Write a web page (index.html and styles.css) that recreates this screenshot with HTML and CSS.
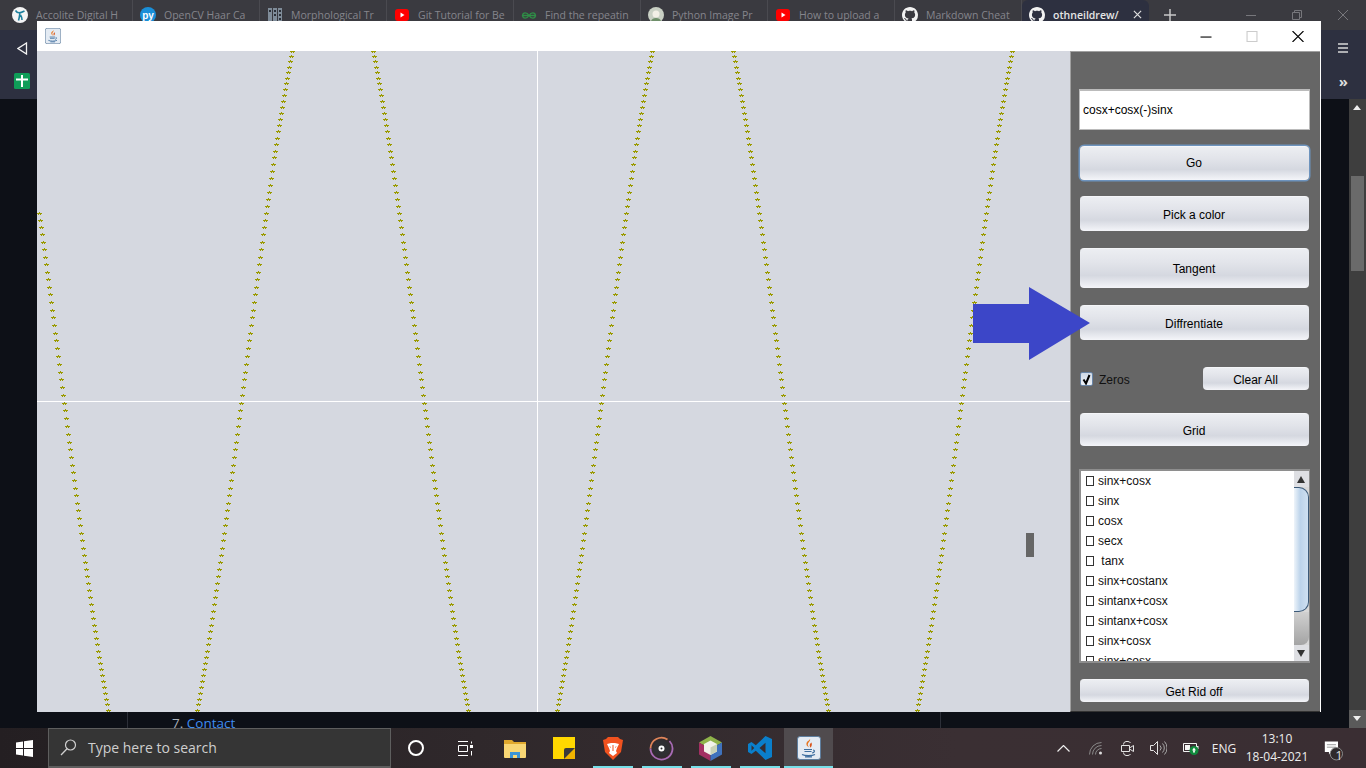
FILE: index.html
```html
<!DOCTYPE html>
<html lang="en">
<head>
    <meta charset="UTF-8">
    <meta name="viewport" content="width=device-width, initial-scale=1.0">
    <title>Graph plotter</title>
    <link rel="stylesheet" href="styles.css">
</head>
<body>

    <!-- Shared icons -->
    <svg class="defs" width="0" height="0">
        <symbol id="i-github" viewBox="0 0 16 16">
            <path fill="#f2f2f2" d="M8 0C3.58 0 0 3.58 0 8c0 3.54 2.29 6.53 5.47 7.59.4.07.55-.17.55-.38 0-.19-.01-.82-.01-1.49-2.01.37-2.53-.49-2.69-.94-.09-.23-.48-.94-.82-1.13-.28-.15-.68-.52-.01-.53.63-.01 1.08.58 1.23.82.72 1.21 1.87.87 2.33.66.07-.52.28-.87.51-1.07-1.78-.2-3.64-.89-3.64-3.95 0-.87.31-1.59.82-2.15-.08-.2-.36-1.02.08-2.12 0 0 .67-.21 2.2.82.64-.18 1.32-.27 2-.27.68 0 1.36.09 2 .27 1.53-1.04 2.2-.82 2.2-.82.44 1.1.16 1.92.08 2.12.51.56.82 1.27.82 2.15 0 3.07-1.87 3.75-3.65 3.95.29.25.54.73.54 1.48 0 1.07-.01 1.93-.01 2.2 0 .21.15.46.55.38A8.013 8.013 0 0016 8c0-4.42-3.58-8-8-8z"/>
        </symbol>
        <symbol id="i-youtube" viewBox="0 0 16 16">
            <rect x="1" y="2" width="14" height="12" rx="3" fill="#f00"/>
            <path fill="#fff" d="M6.500 5.500v5l4-2.500z"/>
        </symbol>
        <symbol id="i-java" viewBox="0 0 24 24">
            <rect x=".5" y=".5" width="23" height="23" rx="2.500" fill="#e4ebf3" stroke="#5f7f9f"/>
            <path fill="#e8761f" d="M13 3c1 2-3 4-2 6.500.4 1 1 1.500 1.300 2-2.300-1-3.600-3-2.600-5C10.400 5.200 12.500 4.500 13 3z"/>
            <path fill="#d9541a" d="M14.500 6.500c-1.300 1-2.400 2.200-1.500 4 .2.500.4.900.3 1.300 1.500-1.300 2-3.500 1.200-5.300z"/>
            <path fill="none" stroke="#3f6f9f" stroke-width="1.200" d="M7 13.500h8M7.500 15.500h7M16 14c2 0 2 2.500-1 3M5 18.500c3 1.500 10 1.500 13 0M8 20.800h7"/>
        </symbol>
    </svg>

    <!-- Browser behind the window -->
    <div class="browser">
        <div class="tabstrip">
            <div class="tab">
                <svg class="favicon" viewBox="0 0 16 16"><circle cx="8" cy="8" r="8" fill="#f4f4f4"/><path fill="none" stroke="#1d7f9c" stroke-width="1.600" d="M3.500 3.500c2 3 4 3 9 .5M8 5.500c-.5 3-.5 5-1.500 8M8.500 8c1 1.500 1.500 3 1.500 5"/></svg>
                <span class="tab-title">Accolite Digital H</span>
            </div>
            <div class="tab">
                <svg class="favicon" viewBox="0 0 16 16"><circle cx="8" cy="8" r="8" fill="#1a8fd8"/><text x="8" y="11.500" text-anchor="middle" class="py">py</text></svg>
                <span class="tab-title">OpenCV Haar Ca</span>
            </div>
            <div class="tab">
                <svg class="favicon" viewBox="0 0 16 16"><path fill="#7f8c99" d="M1 1h4v14H1zM6 1h4v14H6zM11 1h4v14h-4z"/><path fill="#2b3038" d="M2 3h2v2H2zM7 3h2v2H7zM12 3h2v2h-2zM7 7h2v2H7zM12 7h2v2h-2zM12 11h2v2h-2z"/></svg>
                <span class="tab-title">Morphological Tr</span>
            </div>
            <div class="tab">
                <svg class="favicon"><use href="#i-youtube"/></svg>
                <span class="tab-title">Git Tutorial for Be</span>
            </div>
            <div class="tab">
                <svg class="favicon" viewBox="0 0 16 16"><path fill="none" stroke="#2f8d46" stroke-width="1.300" d="M8 8.500C6 5 2 5 1.500 8.500h13C14 5 10 5 8 8.500 6 12 2 12 1.500 8.500M8 8.500c2 3.500 6 3.500 6.500 0"/></svg>
                <span class="tab-title">Find the repeatin</span>
            </div>
            <div class="tab">
                <svg class="favicon" viewBox="0 0 16 16"><circle cx="8" cy="8" r="8" fill="#c9d0c4"/><circle cx="8" cy="7" r="3.500" fill="#f2efe6"/><path fill="#6f8f6a" d="M3 14c1-4 9-4 10 0-3 2.500-7 2.500-10 0z"/></svg>
                <span class="tab-title">Python Image Pr</span>
            </div>
            <div class="tab">
                <svg class="favicon"><use href="#i-youtube"/></svg>
                <span class="tab-title">How to upload a</span>
            </div>
            <div class="tab">
                <svg class="favicon"><use href="#i-github"/></svg>
                <span class="tab-title">Markdown Cheat</span>
            </div>
            <div class="tab active">
                <svg class="favicon"><use href="#i-github"/></svg>
                <span class="tab-title">othneildrew/</span>
                <svg class="tab-close" viewBox="0 0 10 10"><path d="M1 1l8 8M9 1l-8 8"/></svg>
            </div>
            <svg class="new-tab" viewBox="0 0 12 12"><path d="M6 0v12M0 6h12"/></svg>
            <div class="chrome-controls">
                <svg viewBox="0 0 10 10"><path d="M0 5.500h10"/></svg>
                <svg viewBox="0 0 10 10"><path d="M.5 2.500h7v7h-7zM2.500 2.500v-2h7v7h-2"/></svg>
                <svg viewBox="0 0 10 10"><path d="M0 0l10 10M10 0L0 10"/></svg>
            </div>
        </div>

        <div class="toolbar">
            <div class="toolbar-row">
                <svg class="back" viewBox="0 0 11 13"><path d="M9.500 1v11L1 6.500z"/></svg>
                <svg class="menu" viewBox="0 0 10 10"><path d="M0 1h10M0 5h10M0 9h10"/></svg>
            </div>
            <div class="toolbar-row second">
                <svg class="sheet" viewBox="0 0 16 16"><rect width="16" height="16" rx="1.500" fill="#0f9d58"/><path fill="#fff" d="M7 2h2v3.500h5v2H9V14H7V7.500H2v-2h5z"/></svg>
                <span class="more">»</span>
            </div>
        </div>

        <div class="page">
            <div class="article">
                <p class="toc-line">7. <a class="toc-link">Contact</a></p>
            </div>
            <div class="page-scroll">
                <span class="page-arrow up"></span>
                <span class="page-thumb"></span>
                <span class="page-arrow down"></span>
            </div>
        </div>

        <div class="taskbar">
            <div class="start">
                <svg width="17" height="17" viewBox="0 0 17 17"><path fill="#fff" d="M0 2.400l7-1V8H0zM8 1.200L17 0v8H8zM0 9h7v6.600l-7-1zM8 9h9v8l-9-1.200z"/></svg>
            </div>
            <div class="search">
                <svg width="17" height="17" viewBox="0 0 17 17"><circle cx="10.500" cy="6" r="5" fill="none" stroke="#d0d0d0" stroke-width="1.200"/><path d="M7 9.800L1 16" stroke="#d0d0d0" stroke-width="1.300"/></svg>
                <span>Type here to search</span>
            </div>
            <div class="cortana"><span class="ring"></span></div>
            <div class="taskview">
                <svg width="17" height="15" viewBox="0 0 17 15"><path fill="none" stroke="#fff" d="M1 .5h10M1.500 4.500h9v6h-9zM1 14.500h10M14.500 .5v2M14.500 10v4.500"/><rect x="13" y="4" width="3" height="3" fill="#fff"/></svg>
            </div>

            <div class="app">
                <svg width="22" height="19" viewBox="0 0 22 19"><path fill="#e0a92e" d="M0 1h8l2 2h12v4H0z"/><path fill="#f8d775" d="M0 5h22v13a1 1 0 01-1 1H1a1 1 0 01-1-1z"/><path fill="#3c95d6" d="M6 19v-6h10v6h-3v-3H9v3z"/></svg>
            </div>
            <div class="app">
                <svg width="22" height="22" viewBox="0 0 22 22"><path fill="#ffd800" d="M0 0h22v22H0z"/><path fill="#f0b400" d="M22 11v11H11z"/><path fill="#3a3a3a" d="M11 22v-9a2 2 0 012-2h9z"/></svg>
            </div>
            <div class="app running">
                <svg width="20" height="23" viewBox="0 0 20 23"><path fill="#f1521f" d="M5 0h10l2 2 3 1-1 6-1 6-4 4-4 4-4-4-4-4-1-6-1-6 3-1z"/><path fill="#fff" d="M4 7l4-1h4l4 1-2 4-1 3 1 2-4 3-4-3 1-2-1-3z"/><path fill="#f1521f" d="M9.500 8h1v6h-1zM6 9l2 1v1zM14 9l-2 1v1z"/></svg>
            </div>
            <div class="app running">
                <svg width="25" height="25" viewBox="0 0 25 25"><circle cx="12.500" cy="12.500" r="8.500" fill="#2f2f33"/><path fill="none" stroke="#e0855a" stroke-width="1.800" d="M18.500 3.500A11 11 0 001.500 12.500"/><path fill="none" stroke="#a86bb5" stroke-width="1.800" d="M1.500 12.500A11 11 0 1020.500 5"/><circle cx="12.500" cy="12.500" r="3" fill="#fff"/><circle cx="12.500" cy="12.500" r="1" fill="#2f2f33"/></svg>
            </div>
            <div class="app running">
                <svg width="23" height="25" viewBox="0 0 23 25"><path fill="#8fb34a" d="M11.500 0L23 6.500 11.500 13 0 6.500z"/><path fill="#a32f62" d="M0 6.500L11.500 13v12L0 18.500z"/><path fill="#3f72bd" d="M23 6.500L11.500 13v12L23 18.500z"/><path fill="#f2f2ea" d="M11.500 4.500l6.500 3.500v7.500L11.500 19 5 15.500V8z"/><path fill="#c9d2b8" d="M11.500 11.500L18 8v7.500L11.500 19z"/></svg>
            </div>
            <div class="app running">
                <svg width="24" height="24" viewBox="0 0 24 24"><path fill="#0a7fcb" fill-rule="evenodd" d="M17.500 0L24 3v18l-6.500 3-9.700-9.300-4.300 3.300L0 16V8l3.500-2 4.300 3.300zM17.500 6.800L11.500 12l6 5.200zM3.500 9.300v5.400L6.300 12z"/></svg>
            </div>
            <div class="app running current">
                <svg width="24" height="24"><use href="#i-java"/></svg>
            </div>

            <div class="tray">
                <div class="tray-item w33"><svg width="13" height="7" viewBox="0 0 13 7"><path fill="none" stroke="#eee" stroke-width="1.200" d="M.5 6.500l6-6 6 6"/></svg></div>
                <div class="tray-item w32"><svg width="14" height="13" viewBox="0 0 14 13"><path fill="none" stroke="#8a8a8a" d="M.5 12.500A12 12 0 0112.500 .5M3.500 12.500a9 9 0 019-9M6.500 12.500a6 6 0 016-6"/><circle cx="11.500" cy="11" r="1.500" fill="#ddd"/></svg></div>
                <div class="tray-item w31"><svg width="13" height="15" viewBox="0 0 13 15"><path fill="none" stroke="#e4e4e4" d="M2.500 3.500A3 3 0 015 .5h2a3 3 0 012.500 1.500M2.500 11.500A3 3 0 005 14.500h2a3 3 0 002.500-1.500M.5 4.500h8v6h-8zM8.500 7l4-2.500v6l-4-2.500"/></svg></div>
                <div class="tray-item w31"><svg width="17" height="14" viewBox="0 0 17 14"><path fill="none" stroke="#e4e4e4" d="M.5 4.500h3l4-4v13l-4-4h-3z"/><path fill="none" stroke="#aaa" d="M10 4.500a3.500 3.500 0 010 5M12.500 2.500a6.500 6.500 0 010 9M14.500 .5a9.500 9.500 0 010 13"/></svg></div>
                <div class="tray-item w34"><svg width="16" height="14" viewBox="0 0 16 14"><path fill="none" stroke="#f4f4f4" d="M.5 2.500h13v8H.5z"/><path fill="#f4f4f4" d="M2 4h5v5H2zM14 5h1.500v3H14z"/><circle cx="11" cy="9.500" r="4.500" fill="#0f8a3c"/><path fill="#fff" d="M11 6.500l2 3-1.300-.2.300 2.200h-2l.3-2.200L9 9.500z"/></svg></div>
                <div class="tray-item w32 tray-text">ENG</div>
                <div class="clock">
                    <span>13:10</span>
                    <span>18-04-2021</span>
                </div>
                <div class="notify">
                    <svg width="34" height="32" viewBox="0 0 34 32"><path fill="#fff" d="M1 8h16v13H9l-3 3v-3H1z"/><path stroke="#888" d="M3.500 12h11M3.500 15h11"/><circle cx="15" cy="23" r="7.500" fill="#2f2a2c" stroke="#8a8a8a" stroke-width="1.200"/></svg>
                    <span class="notify-count">1</span>
                </div>
            </div>
        </div>
    </div>

    <!-- The Java window floating over the browser -->
    <div class="window">
        <div class="titlebar">
            <svg class="title-icon"><use href="#i-java"/></svg>
            <div class="win-controls">
                <svg viewBox="0 0 10 10"><path stroke="#000" d="M0 5.500h10"/></svg>
                <svg viewBox="0 0 10 10"><path stroke="#ccc" fill="none" d="M.5 .5h9v9h-9z"/></svg>
                <svg viewBox="0 0 10 10"><path stroke="#000" d="M0 0l10 10M10 0L0 10"/></svg>
            </div>
        </div>
        <div class="window-body">
            <div class="canvas">
                <svg id="plot" class="plot" width="1033" height="661">
                    <path d="M500.500 0v661M0 350.500h1033" stroke="#fff" fill="none"/>
                    <path id="curve" class="curve" d=""/>
                </svg>
                <span class="marker"></span>
            </div>
            <div class="panel">
                <div class="func-input">cosx+cosx(-)sinx</div>
                <button class="btn btn-go">Go</button>
                <button class="btn btn-pick">Pick a color</button>
                <button class="btn btn-tangent">Tangent</button>
                <button class="btn btn-diff">Diffrentiate</button>
                <div class="zero-row">
                    <label class="zeros">
                        <span class="check"><svg width="11" height="11" viewBox="0 0 11 11"><path fill="none" stroke="#000" stroke-width="2" d="M2.500 5.500l2.500 4L8.500 1"/></svg></span>
                        Zeros
                    </label>
                    <button class="btn btn-clear">Clear All</button>
                </div>
                <button class="btn btn-grid">Grid</button>
                <div class="func-list">
                    <ul class="funcs">
                        <li>sinx+cosx</li>
                        <li>sinx</li>
                        <li>cosx</li>
                        <li>secx</li>
                        <li>&nbsp;tanx</li>
                        <li>sinx+costanx</li>
                        <li>sintanx+cosx</li>
                        <li>sintanx+cosx</li>
                        <li>sinx+cosx</li>
                        <li>sinx+cosx</li>
                    </ul>
                    <div class="list-scroll">
                        <span class="list-arrow up"></span>
                        <span class="list-thumb"></span>
                        <span class="list-track"></span>
                        <span class="list-arrow down"></span>
                    </div>
                </div>
                <button class="btn btn-rid">Get Rid off</button>
            </div>
        </div>
    </div>

    <!-- Arrow pasted over the screenshot -->
    <svg class="big-arrow" width="117" height="73" viewBox="0 0 117 73">
        <path fill="#3c46c8" d="M0 17h56V0l61 36-61 37V56H0z"/>
    </svg>

    <script src="plot.js"></script>
</body>
</html>
```

FILE: styles.css
```css
* {
    box-sizing: border-box;
}

body {
    margin: 0;
    width: 1366px;
    height: 768px;
    overflow: hidden;
    background-color: #0d1017;
    font-family: "Open Sans", "Noto Sans", sans-serif;
}

.defs {
    position: absolute;
}

.browser {
    display: flex;
    flex-direction: column;
    height: 768px;
}

/* Tab strip */
.tabstrip {
    display: flex;
    align-items: center;
    height: 30px;
    padding-left: 5px;
    background-color: #3a3a40;
}

.tab {
    display: flex;
    align-items: center;
    flex: none;
    width: 127px;
    height: 30px;
    padding: 0 0 1px 7px;
    gap: 8px;
    border-right: 1px solid #4a4a50;
}

.tab:first-child {
    width: 128px;
}

.tab.active {
    background-color: #2d3040;
    border-right: none;
    border-radius: 6px 6px 0 0;
}

.favicon {
    flex: none;
    width: 16px;
    height: 16px;
}

.py {
    font-family: "Liberation Sans", sans-serif;
    font-size: 10px;
    font-weight: bold;
    fill: #fff;
}

.tab-title {
    flex: 1;
    min-width: 0;
    white-space: nowrap;
    font-size: 10.500px;
    line-height: 16px;
    color: #85858c;
}

.active .tab-title {
    flex: none;
    width: 78px;
    color: #e6e6e6;
    font-weight: 600;
}

.tab-close {
    flex: none;
    width: 9px;
    height: 9px;
    margin-left: -6px;
    stroke: #e0e0e0;
    stroke-width: 1.300;
}

.new-tab {
    flex: none;
    width: 12px;
    height: 12px;
    margin-left: 15px;
    stroke: #c8c8c8;
    stroke-width: 1.500;
}

.chrome-controls {
    display: flex;
    margin-left: auto;
    padding-bottom: 1px;
}

.chrome-controls svg {
    width: 46px;
    height: 10px;
    fill: none;
    stroke: #77777c;
}

/* Toolbar */
.toolbar {
    height: 69px;
    padding: 0 18px 4px 14px;
    background-color: #2d3040;
}

.toolbar-row {
    display: flex;
    justify-content: space-between;
    align-items: center;
    height: 36px;
}

.toolbar-row.second {
    height: 29px;
}

.back {
    width: 11px;
    height: 13px;
    margin-left: 3px;
    fill: none;
    stroke: #f2f2f2;
    stroke-width: 1.300;
}

.menu {
    width: 10px;
    height: 10px;
    stroke: #d8d8d8;
    stroke-width: 1.500;
}

.sheet {
    width: 16px;
    height: 16px;
}

.more {
    font-size: 15px;
    line-height: 16px;
    font-weight: bold;
    color: #dcdcdc;
}

/* Page behind the window */
.page {
    display: flex;
    flex: 1;
    min-height: 0;
}

.article {
    display: flex;
    align-items: flex-end;
    width: 814px;
    margin-left: 127px;
    padding-left: 44px;
    border-left: 1px solid #2c2f38;
    border-right: 1px solid #2c2f38;
    overflow: hidden;
}

.toc-line {
    margin: 0 0 -3px;
    font-size: 13.500px;
    line-height: 16px;
    color: #a9b1ba;
}

.toc-link {
    color: #3f8cf0;
}

.page-scroll {
    display: flex;
    flex-direction: column;
    align-items: center;
    width: 17px;
    margin-left: auto;
    background-color: #3e3e3e;
}

.page-arrow {
    position: relative;
    display: block;
    width: 17px;
    height: 18px;
}

.page-arrow.down {
    margin-top: auto;
    background-color: #5a5a5a;
}

.page-arrow::after {
    content: "";
    position: absolute;
    left: 4px;
    top: 6px;
    border-left: 4.500px solid transparent;
    border-right: 4.500px solid transparent;
}

.page-arrow.up::after {
    border-bottom: 5px solid #eee;
}

.page-arrow.down::after {
    border-top: 5px solid #eee;
}

.page-thumb {
    display: block;
    width: 13px;
    height: 95px;
    margin-top: 59px;
    background-color: #6a6a6a;
}

/* Taskbar */
.taskbar {
    display: flex;
    align-items: stretch;
    height: 40px;
    background: linear-gradient(to right, #241f22, #2f282b 35%, #3a2f33 70%, #3a2e33);
    color: #eee;
}

.start {
    display: flex;
    align-items: center;
    justify-content: center;
    width: 48px;
}

.search {
    display: flex;
    align-items: center;
    width: 343px;
    padding-left: 11px;
    gap: 11px;
    background-color: #353535;
    border: 1px solid #5e5e5e;
    border-bottom-width: 2px;
    font-size: 14px;
    color: #cfcfcf;
}

.cortana,
.taskview,
.app {
    display: flex;
    align-items: center;
    justify-content: center;
}

.cortana {
    width: 50px;
}

.ring {
    width: 16px;
    height: 16px;
    border: 2px solid #fff;
    border-radius: 50%;
}

.taskview {
    width: 49px;
}

.app {
    position: relative;
    width: 49px;
}

.app.running::after {
    content: "";
    position: absolute;
    left: 5px;
    right: 4px;
    bottom: 0;
    height: 2px;
    background-color: #76dfe8;
}

.app.current {
    background-color: #504b4e;
}

.app.current::after {
    left: 0;
    right: 0;
}

.tray {
    display: flex;
    align-items: stretch;
    margin-left: auto;
    padding-right: 14px;
}

.tray-item {
    display: flex;
    align-items: center;
    justify-content: center;
}

.w31 {
    width: 31px;
}

.w32 {
    width: 32px;
}

.w33 {
    width: 33px;
}

.w34 {
    width: 34px;
}

.tray-text {
    font-size: 12px;
}

.clock {
    display: flex;
    flex-direction: column;
    align-items: center;
    justify-content: center;
    width: 74px;
    font-size: 12px;
    line-height: 18px;
}

.notify {
    position: relative;
    display: flex;
    align-items: center;
    width: 38px;
    padding-left: 10px;
}

.notify-count {
    position: absolute;
    left: 19px;
    top: 19px;
    width: 12px;
    text-align: center;
    font-size: 13px;
    line-height: 16px;
    color: #ddd;
}

/* Java window */
.window {
    position: absolute;
    left: 37px;
    top: 21px;
    display: flex;
    flex-direction: column;
    width: 1284px;
    height: 691px;
    background-color: #fff;
    font-family: "Liberation Sans", Arial, sans-serif;
    font-size: 12px;
    color: #000;
}

.titlebar {
    display: flex;
    align-items: center;
    justify-content: space-between;
    flex: none;
    height: 30px;
    padding-left: 8px;
}

.title-icon {
    width: 16px;
    height: 16px;
}

.win-controls {
    display: flex;
}

.win-controls svg {
    width: 46px;
    height: 11px;
    fill: none;
}

.window-body {
    display: flex;
    flex: 1;
    min-height: 0;
}

.canvas {
    position: relative;
    flex: none;
    width: 1033px;
    overflow: hidden;
    background-color: #d5d8e0;
}

.plot {
    display: block;
}

.curve {
    fill: none;
    stroke: #9a9a00;
    stroke-width: 1;
    shape-rendering: crispEdges;
}

.marker {
    position: absolute;
    left: 989px;
    top: 482px;
    width: 8px;
    height: 24px;
    background-color: #666;
}

.big-arrow {
    position: absolute;
    left: 973px;
    top: 287px;
}

/* Control panel */
.panel {
    display: flex;
    flex-direction: column;
    flex: none;
    width: 250px;
    height: 661px;
    padding: 37px 10px 0 8px;
    margin-right: 1px;
    background-color: #666;
    border-left: 1px solid #a0a0a0;
    border-top: 1px solid #a0a0a0;
    border-bottom: 1px solid #333;
}

.func-input {
    display: flex;
    align-items: center;
    height: 41px;
    padding: 0 0 0 3px;
    background-color: #fff;
    border: 1px solid #bbb;
    border-top-width: 2px;
}

.btn {
    display: block;
    margin: 0 1px;
    padding: 1px 1px 0 0;
    background: linear-gradient(to bottom, #eceef2 0%, #e2e4ea 35%, #d5d8e0 68%, #f4f5f9 100%);
    border: none;
    border-top: 1px solid #f4f5f8;
    border-radius: 4px;
    font-family: "Liberation Sans", Arial, sans-serif;
    font-size: 12px;
    color: #000;
}

.btn-go {
    height: 34px;
    margin-top: 16px;
    padding: 0 1px 1px 0;
    box-shadow: 0 0 0 1.500px #6d93bd;
}

.btn-pick {
    height: 35px;
    margin-top: 16px;
}

.btn-tangent {
    height: 40px;
    margin-top: 17px;
    padding-top: 0;
}

.btn-diff {
    height: 35px;
    margin-top: 17px;
}

.zero-row {
    display: flex;
    align-items: center;
    justify-content: space-between;
    height: 23px;
    margin-top: 27px;
}

.zeros {
    display: flex;
    align-items: center;
    gap: 6px;
    margin: 2px 0 0 1px;
    color: #111;
}

.check {
    display: flex;
    align-items: center;
    justify-content: center;
    width: 13px;
    height: 14px;
    margin-top: -1px;
    background: linear-gradient(to bottom, #cfd9e6, #eef2f7);
    border: 1px solid #6a86a8;
    border-radius: 2px;
}

.btn-clear {
    width: 106px;
    height: 23px;
}

.btn-grid {
    height: 33px;
    margin-top: 23px;
}

.func-list {
    display: flex;
    height: 194px;
    margin-top: 23px;
    background-color: #fff;
    border: 2px solid #8e8e8e;
    border-right-width: 1px;
}

.funcs {
    flex: 1;
    margin: 0;
    padding: 0;
    overflow: hidden;
    list-style-type: none;
}

.funcs li {
    display: flex;
    align-items: center;
    height: 20px;
    padding-left: 5px;
    white-space: pre;
    color: #111;
}

.funcs li::before {
    content: "";
    flex: none;
    width: 6px;
    height: 8px;
    margin-right: 4px;
    border: 1px solid #333;
}

.list-scroll {
    display: flex;
    flex-direction: column;
    flex: none;
    width: 15px;
    background-color: #d8d8d8;
}

.list-arrow {
    position: relative;
    display: block;
    flex: none;
    height: 16px;
    background-color: #dedfe3;
}

.list-arrow::after {
    content: "";
    position: absolute;
    left: 3px;
    top: 5px;
    border-left: 4px solid transparent;
    border-right: 4px solid transparent;
}

.list-arrow.up::after {
    border-bottom: 7px solid #333;
}

.list-arrow.down::after {
    border-top: 7px solid #333;
}

.list-thumb {
    display: block;
    flex: none;
    height: 125px;
    background: linear-gradient(to right, #eef4fa, #bcd3ea 45%, #cfe0f1);
    border: 1px solid #3c5a78;
    border-left: none;
    border-radius: 0 10px 10px 0;
}

.list-track {
    display: block;
    flex: 1;
    background: linear-gradient(to bottom, #d0d0d0, #a4a4a4);
    border-radius: 0 0 8px 0;
}

.btn-rid {
    height: 23px;
    margin-top: 16px;
}
```

FILE: plot.js
```js
// Same function the app draws: one star for every pixel column
const AMPLITUDE = 447;
const PERIOD = 360;
const FIRST_ZERO = 25.5; // x of the first crossing, in canvas pixels
const CURVE_MID_Y = 340;

function starAt(x, y) {
    return `M${x - 2} ${y + 0.5}h5M${x + 0.5} ${y - 1}v2M${x - 0.5} ${y + 1}v1M${x + 1.5} ${y + 1}v1`;
}

function buildCurve() {
    let d = "";
    for (let x = 2; x < 1033; x++) {
        const angle = 2 * Math.PI * (x - FIRST_ZERO) / PERIOD;
        const y = Math.round(CURVE_MID_Y + AMPLITUDE * Math.sin(angle));
        // the canvas clips anything past its edges
        if (y >= -6 && y <= 668) {
            d += starAt(x, y);
        }
    }
    document.getElementById("curve").setAttribute("d", d);
}

buildCurve();
```
